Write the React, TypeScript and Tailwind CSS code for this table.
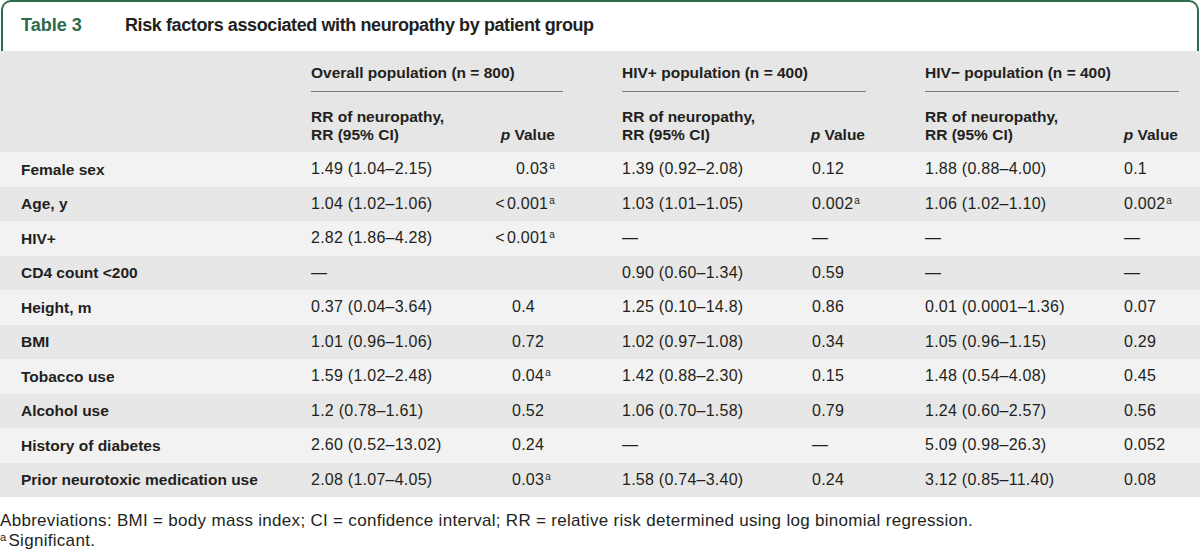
import React from 'react';

type Row = {
    label: string;
    cells: string[];
    sig: boolean[];
};

const rows: Row[] = [
    {label: 'Female sex', cells: ['1.49 (1.04–2.15)', '0.03', '1.39 (0.92–2.08)', '0.12', '1.88 (0.88–4.00)', '0.1'], sig: [false, true, false, false, false, false]},
    {label: 'Age, y', cells: ['1.04 (1.02–1.06)', '<0.001', '1.03 (1.01–1.05)', '0.002', '1.06 (1.02–1.10)', '0.002'], sig: [false, true, false, true, false, true]},
    {label: 'HIV+', cells: ['2.82 (1.86–4.28)', '<0.001', '—', '—', '—', '—'], sig: [false, true, false, false, false, false]},
    {label: 'CD4 count <200', cells: ['—', '', '0.90 (0.60–1.34)', '0.59', '—', '—'], sig: [false, false, false, false, false, false]},
    {label: 'Height, m', cells: ['0.37 (0.04–3.64)', '0.4', '1.25 (0.10–14.8)', '0.86', '0.01 (0.0001–1.36)', '0.07'], sig: [false, false, false, false, false, false]},
    {label: 'BMI', cells: ['1.01 (0.96–1.06)', '0.72', '1.02 (0.97–1.08)', '0.34', '1.05 (0.96–1.15)', '0.29'], sig: [false, false, false, false, false, false]},
    {label: 'Tobacco use', cells: ['1.59 (1.02–2.48)', '0.04', '1.42 (0.88–2.30)', '0.15', '1.48 (0.54–4.08)', '0.45'], sig: [false, true, false, false, false, false]},
    {label: 'Alcohol use', cells: ['1.2 (0.78–1.61)', '0.52', '1.06 (0.70–1.58)', '0.79', '1.24 (0.60–2.57)', '0.56'], sig: [false, false, false, false, false, false]},
    {label: 'History of diabetes', cells: ['2.60 (0.52–13.02)', '0.24', '—', '—', '5.09 (0.98–26.3)', '0.052'], sig: [false, false, false, false, false, false]},
    {label: 'Prior neurotoxic medication use', cells: ['2.08 (1.07–4.05)', '0.03', '1.58 (0.74–3.40)', '0.24', '3.12 (0.85–11.40)', '0.08'], sig: [false, true, false, false, false, false]},
];

const cols = 'grid grid-cols-[311px_198px_54px_59px_190px_54px_59px_199px_55px_21px]';

const Sup = () => <sup className="text-[10px] ml-[1px]">a</sup>;

const Val = ({text, sig}: { text: string; sig: boolean }) => (
    <>
        {text.startsWith('<') ? <span className="mr-[2px]">&lt;</span> : null}
        {text.startsWith('<') ? text.slice(1) : text}
        {sig && <Sup/>}
    </>
);

const PValueHead = ({className}: { className: string }) => (
    <div className={`flex items-end justify-end whitespace-nowrap ${className}`}>
        <span><span className="italic">p</span> Value</span>
    </div>
);

const App: React.FC = () => {
    return (
        <div className="w-[1200px] h-[554px] bg-white text-[#231f20] font-['Liberation_Sans',Arial,sans-serif] overflow-hidden">
            {/* Title */}
            <div className="h-[51px] mx-[1px] border-2 border-b-0 border-[#2e6a4c] rounded-t-[10px] flex items-center pl-[18px] pb-[2px] text-[18px] font-bold">
                <span className="w-[104px] text-[#2e6a4c]">Table 3</span>
                <span className="tracking-[-0.4px]">Risk factors associated with neuropathy by patient group</span>
            </div>

            {/* Header */}
            <div className={`${cols} bg-[#e6e6e6] text-[15.5px] font-bold`}>
                <div/>
                <div className="col-span-2 h-[41px] pt-[12px] leading-[20px] border-b border-[#7a7a7a]">Overall population (n = 800)</div>
                <div/>
                <div className="col-span-2 h-[41px] pt-[12px] leading-[20px] border-b border-[#7a7a7a]">HIV+ population (n = 400)</div>
                <div/>
                <div className="col-span-2 h-[41px] pt-[12px] leading-[20px] border-b border-[#7a7a7a]">HIV− population (n = 400)</div>
                <div/>

                <div className="h-[60px]"/>
                <div className="pt-[16px] pb-[8px] leading-[18px] whitespace-nowrap">RR of neuropathy,<br/>RR (95% CI)</div>
                <PValueHead className="pb-[8px] leading-[18px] pr-[8px]"/>
                <div/>
                <div className="pt-[16px] pb-[8px] leading-[18px] whitespace-nowrap">RR of neuropathy,<br/>RR (95% CI)</div>
                <PValueHead className="pb-[8px] leading-[18px] pr-[1px]"/>
                <div/>
                <div className="pt-[16px] pb-[8px] leading-[18px] whitespace-nowrap">RR of neuropathy,<br/>RR (95% CI)</div>
                <PValueHead className="pb-[8px] leading-[18px] pr-[1px]"/>
                <div/>
            </div>

            {/* Body */}
            {rows.map((row, i) => (
                <div
                    key={row.label}
                    className={`${cols} h-[34.5px] items-center text-[16px] tracking-[0.25px] ${i % 2 === 0 ? 'bg-[#f2f2f2]' : 'bg-[#e7e7e7]'}`}
                >
                    <div className="pl-[21px] font-bold whitespace-nowrap text-[15.5px] tracking-[0px]">{row.label}</div>
                    <div className="whitespace-nowrap">{row.cells[0]}</div>
                    <div className={i < 3 ? 'text-right pr-[8px] whitespace-nowrap flex justify-end' : 'pl-[3px] whitespace-nowrap'}>
                        <span><Val text={row.cells[1]} sig={row.sig[1]}/></span>
                    </div>
                    <div/>
                    <div className="whitespace-nowrap">{row.cells[2]}</div>
                    <div className="whitespace-nowrap"><Val text={row.cells[3]} sig={row.sig[3]}/></div>
                    <div/>
                    <div className="whitespace-nowrap">{row.cells[4]}</div>
                    <div className="whitespace-nowrap"><Val text={row.cells[5]} sig={row.sig[5]}/></div>
                    <div/>
                </div>
            ))}

            {/* Footnotes */}
            <div className="pt-[14px] text-[17px] tracking-[0.3px] leading-[20px]">
                <p>Abbreviations: BMI = body mass index; CI = confidence interval; RR = relative risk determined using log binomial regression.</p>
                <p><sup className="text-[11px] mr-[2px]">a</sup>Significant.</p>
            </div>
        </div>
    );
};

export default App;
